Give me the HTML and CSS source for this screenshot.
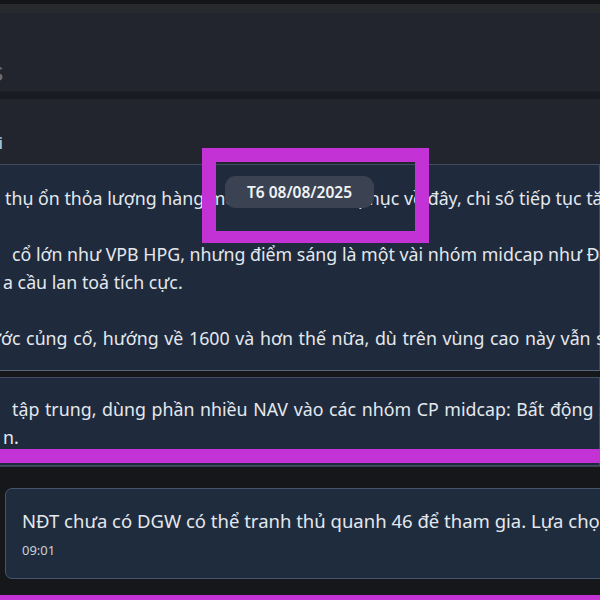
FILE: index.html
```
<!DOCTYPE html>
<html lang="vi">
<head>
    <meta charset="UTF-8">
    <meta name="viewport" content="width=device-width, initial-scale=1.0">
    <title>chat</title>
    <link rel="stylesheet" href="styles.css">
</head>
<body>
    <div class="topline"></div>
    <div class="tabstrip"></div>
    <div class="header">
        <span class="cut-glyph">s</span>
    </div>
    <div class="divider"></div>
    <div class="subheader">
        <span class="sender">ới</span>
    </div>

    <div class="msg first">
        <p>thụ ổn thỏa lượng hàng mới chỉ số VN hồi phục về đây, chi số tiếp tục tăng</p>
        <p>&nbsp;</p>
        <p class="indent">cổ lớn như VPB HPG, nhưng điểm sáng là một vài nhóm midcap như ĐHC</p>
        <p class="tight">a cầu lan toả tích cực.</p>
        <p>&nbsp;</p>
        <p class="cut">ước củng cố, hướng về 1600 và hơn thế nữa, dù trên vùng cao này vẫn sẽ</p>
    </div>
    <div class="msg second">
        <p class="indent wide">tập trung, dùng phần nhiều NAV vào các nhóm CP midcap: Bất động sản</p>
        <p class="tight">n.</p>
    </div>

    <div class="gap"></div>
    <div class="msg card">
        <p>NĐT chưa có DGW có thể tranh thủ quanh 46 để tham gia. Lựa chọn tốt</p>
        <span class="time">09:01</span>
    </div>

    <!-- overlays -->
    <div class="date-pill">T6 08/08/2025</div>
    <div class="mark-box"></div>
    <div class="mark-line mid"></div>
    <div class="mark-line bottom"></div>
</body>
</html>
```

FILE: styles.css
```
* {
    margin: 0;
    padding: 0;
    box-sizing: border-box;
}
body {
    width: 600px;
    height: 600px;
    overflow: hidden;
    position: relative;
    background-color: #16171b;
    font-family: "Noto Sans", "Open Sans", sans-serif;
    color: #e4e8ee;
}
.topline {
    height: 4px;
    background-color: #131415;
}
.tabstrip {
    height: 9px;
    background-color: #28292c;
}
.header {
    height: 78px;
    background-color: #22252d;
    padding-top: 46px;
}
.cut-glyph {
    display: block;
    margin-left: -9px;
    font-size: 26px;
    line-height: 24px;
    color: #6c7078;
}
.divider {
    height: 8px;
    background-color: #181b22;
    border-top: 1px solid #1c2029;
}
.subheader {
    height: 65px;
    background-color: #22252d;
    padding-top: 34px;
}
.sender {
    display: block;
    margin-left: -11px;
    font-size: 16px;
    line-height: 20px;
    color: #d6d9de;
}
.msg {
    background-color: #1f2b3d;
    border: 1px solid #3f4d62;
    font-size: 17.8px;
    line-height: 28px;
    white-space: nowrap;
}
.msg.first {
    margin-left: -10px;
    padding: 19px 0 18px 14px;
    border-bottom-color: #56657a;
}
.msg.second {
    margin-left: -10px;
    margin-top: 6px;
    padding: 17px 0 14px 14px;
}
.indent {
    padding-left: 7px;
}
.wide {
    word-spacing: 1px;
}
.tight {
    margin-left: -2px;
}
.cut {
    margin-left: -16px;
    word-spacing: 1px;
}
.gap {
    height: 22px;
    border-top: 1px solid #3a4250;
}
.msg.card {
    margin-left: 5px;
    width: 640px;
    height: 91px;
    border-radius: 7px;
    background-color: #1f2c3e;
    border-color: #45556b;
    padding: 17px 0 0 16px;
    font-size: 18.5px;
    line-height: 30px;
}
.time {
    display: block;
    font-size: 13px;
    line-height: 28px;
    color: #c9d0d9;
}
.date-pill {
    position: absolute;
    left: 225px;
    top: 176px;
    width: 149px;
    height: 32px;
    border-radius: 11px;
    background-color: #3b4352;
    color: #f0f3f7;
    font-size: 15.5px;
    font-weight: 600;
    line-height: 32px;
    text-align: center;
}
.mark-box {
    position: absolute;
    left: 202px;
    top: 148px;
    width: 227px;
    height: 95px;
    border: 14px solid #c232d4;
    border-bottom-width: 12px;
}
.mark-line {
    position: absolute;
    left: 0;
    width: 600px;
    background-color: #c232d4;
}
.mark-line.mid {
    top: 449px;
    height: 14px;
}
.mark-line.bottom {
    top: 595px;
    height: 5px;
}
```
